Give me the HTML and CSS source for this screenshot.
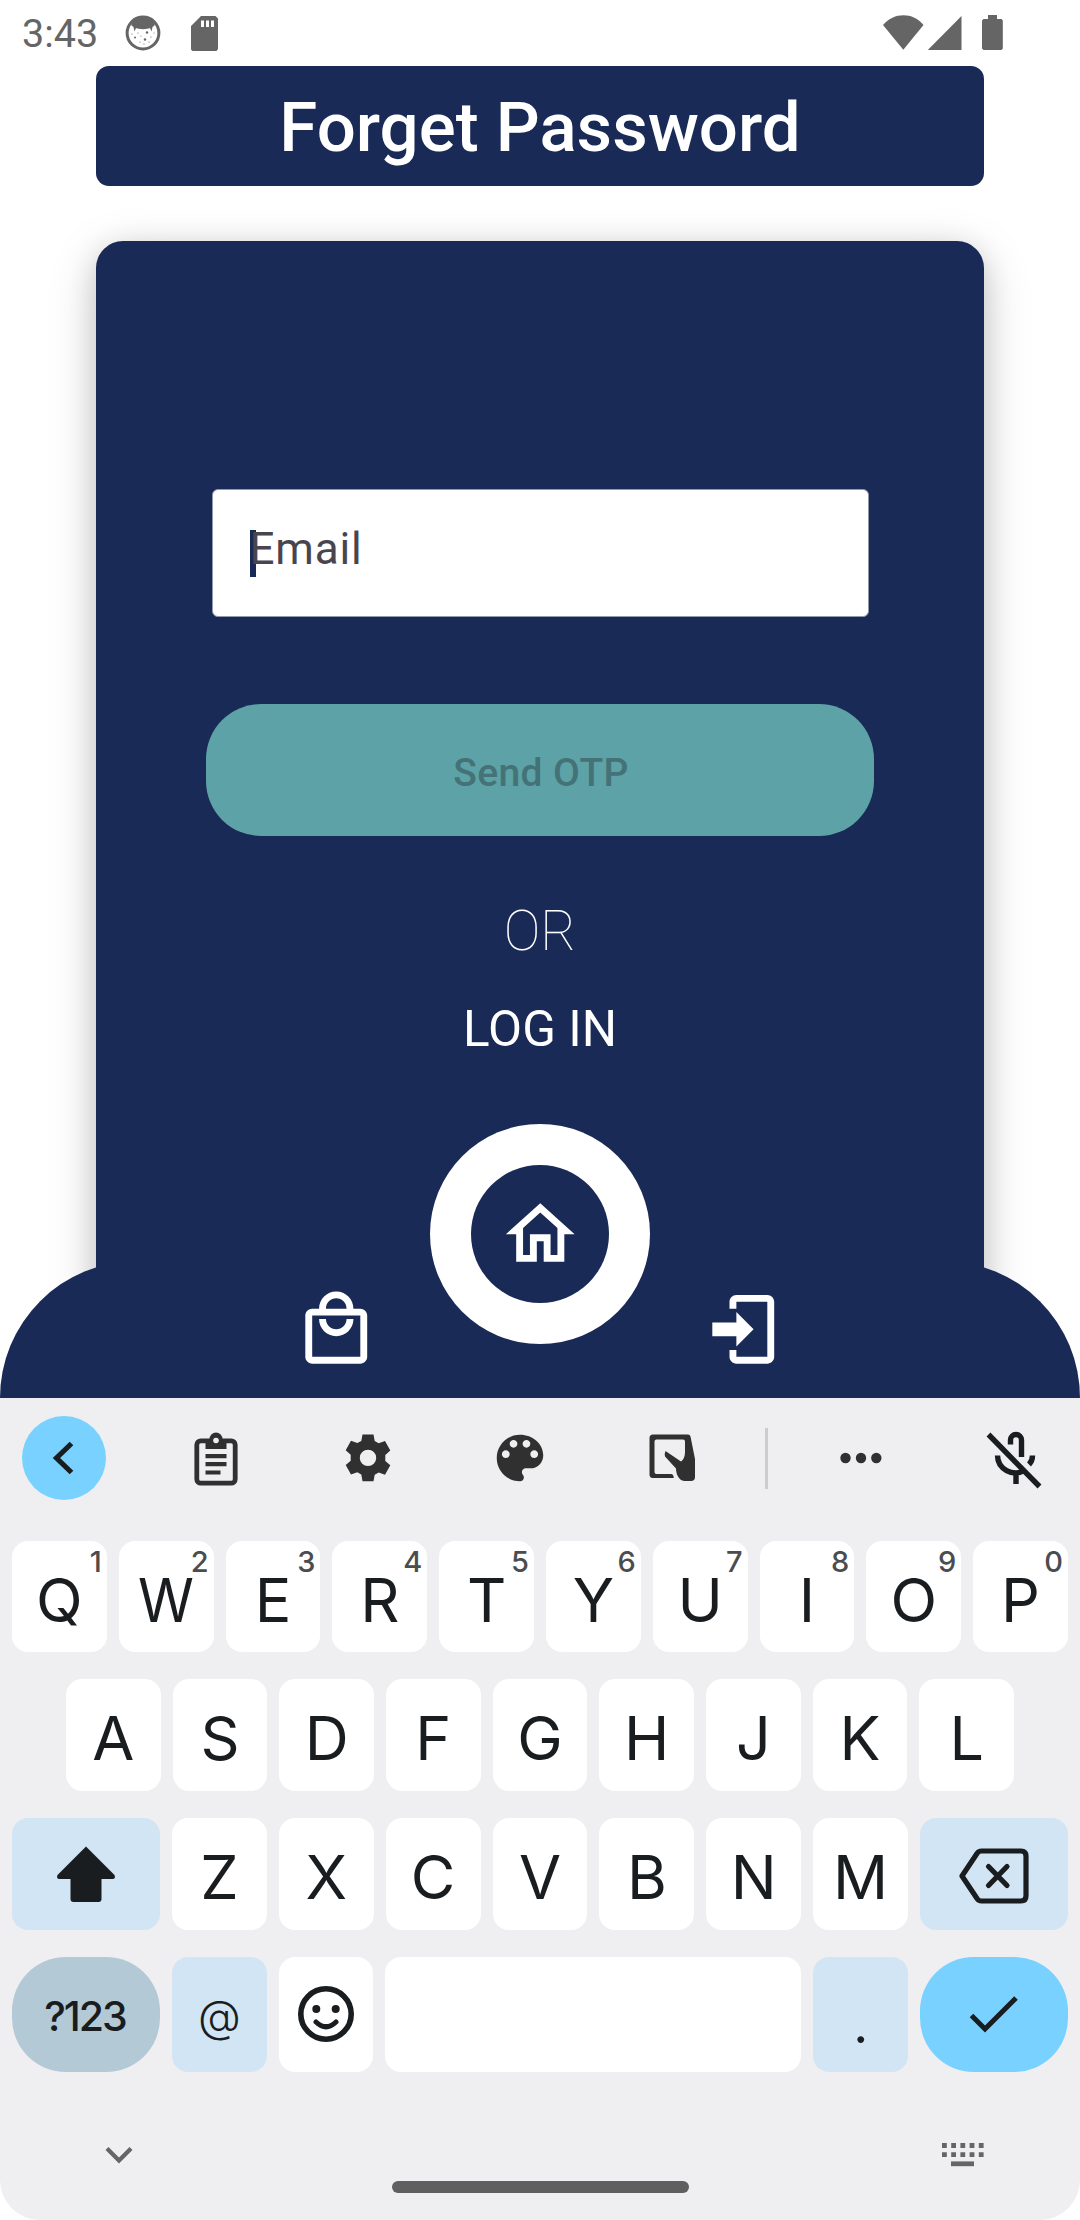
FILE: index.html
```html
<!DOCTYPE html>
<html lang="en">
<head>
<meta charset="utf-8">
<title>Forget Password</title>
<link rel="stylesheet" href="styles.css">
</head>
<body>
<div class="screen">
  <header class="status">
    <span class="clock">3:43</span>
    <svg class="st-cat" width="36" height="36" viewBox="0 0 36 36"><circle cx="18" cy="18" r="15.9" fill="none" stroke="#656565" stroke-width="3"/><path d="M6 10C9 4 13 2 18 2s9 2 12 8l-2.500 2-1 4.500-1.500-3.500c-3 1.500-11 1.500-14 0l-1.500 3.500-1-4.500z" fill="#656565"/><g fill="#656565"><circle cx="10" cy="22.500" r="1"/><circle cx="20" cy="24.500" r="1.200"/><circle cx="22" cy="17.500" r="1.200"/><circle cx="13" cy="18" r=".6"/><circle cx="26" cy="22" r=".6"/><circle cx="15" cy="27" r=".6"/><circle cx="19" cy="29" r=".6"/><circle cx="24" cy="27" r=".6"/><circle cx="7" cy="19" r=".6"/><circle cx="16" cy="21" r=".5"/><circle cx="29" cy="18" r=".5"/></g></svg>
    <svg class="st-sd" width="27" height="35" viewBox="0 0 27 35"><path fill="#656565" fill-rule="evenodd" d="M10 0h14.500L27 2.500V33l-1.500 2h-24L0 33.500V10zM10 4.500V11h3V4.500zM15 4.500V11h3V4.500zM20 4.500V11h3V4.500z"/></svg>
    <svg class="st-net" width="120" height="35" viewBox="0 0 120 35" fill="#656565"><path d="M0 10C11-3 30-3 40.500 10L20.300 34.800z"/><path d="M78.500 1v34H44.800z"/><path d="M105 0h9v4h4.500l1.300 1.500v28L118.500 35h-18L99 33.500v-28L100.500 4h4.500z"/></svg>
  </header>

  <h1 class="title">Forget Password</h1>

  <main class="card">
    <div class="field"><span class="caret"></span><span class="hint">Email</span></div>
    <button class="send" disabled>Send OTP</button>
    <p class="or">OR</p>
    <a class="login">LOG IN</a>
  </main>

  <nav class="nav">
    <svg class="nav-icon" viewBox="0 0 24 24"><path d="M19 6h-2c0-2.760-2.240-5-5-5S7 3.240 7 6H5c-1.100 0-2 .9-2 2v12c0 1.100.9 2 2 2h14c1.100 0 2-.9 2-2V8c0-1.100-.9-2-2-2zm-7-3c1.660 0 3 1.340 3 3H9c0-1.660 1.340-3 3-3zm7 17H5V8h14v12zm-7-8c-1.660 0-3-1.340-3-3H7c0 2.760 2.240 5 5 5s5-2.240 5-5h-2c0 1.660-1.340 3-3 3z"/></svg>
    <svg class="nav-icon" viewBox="0 0 24 24"><path d="M8 6V4c0-1.100.9-2 2-2h9c1.100 0 2 .9 2 2v16c0 1.100-.9 2-2 2h-9c-1.100 0-2-.9-2-2v-2h2v2h9V4h-9v2zM3 10h7V7l5 5-5 5v-3H3z"/></svg>
    <div class="home"><div class="home-in"><svg class="nav-icon" viewBox="0 0 24 24"><path d="M12 5.690l5 4.500V18h-2v-6H9v6H7v-7.810l5-4.500M12 3L2 12h3v8h6v-6h2v6h6v-8h3L12 3z"/></svg></div></div>
  </nav>

  <section class="keyboard">
    <div class="toolbar">
      <div class="tool back"><svg width="84" height="84" viewBox="0 0 84 84"><path d="M49.500 27.500L34.500 42l15 14.500" fill="none" stroke="#191d1f" stroke-width="5.200"/></svg></div>
      <div class="tool"><svg width="62" height="62" viewBox="0 0 62 62"><rect x="11.800" y="13.800" width="38.400" height="42.400" rx="4" fill="none" stroke="#303030" stroke-width="4.800"/><path d="M20.500 12h5a6 6 0 0 1 11 0h5v10h-21z" fill="#303030"/><path d="M24.500 12a6.500 6.500 0 0 1 13 0z" fill="#303030"/><circle cx="31" cy="13.500" r="2.800" fill="#efeff1"/><path d="M20.500 29.200h21M20.500 37.200h21M20.500 45.500h15" stroke="#303030" stroke-width="4.200"/></svg></div>
      <div class="tool"><svg width="62" height="62" viewBox="0 0 62 62"><path fill="#303030" fill-rule="evenodd" d="M25.500 7.500h11l1.200 6.500 4 2.300 6.300-2.300 5.300 9.500-5 4.500v6l5 4.300-5.300 9.400-6.300-2.200-4 2.300-1.200 6.500h-11L24.300 47.500l-4-2.300-6.300 2.200-5.300-9.400 5-4.300v-6l-5-4.500L14 13.700l6.300 2.300 4-2zM31 22.700a8.200 8.200 0 1 0 0 16.400 8.200 8.200 0 0 0 0-16.400z"/></svg></div>
      <div class="tool"><svg width="62" height="62" viewBox="0 0 24 24"><path fill="#303030" d="M12 3c-4.970 0-9 4.030-9 9s4.030 9 9 9c.83 0 1.500-.67 1.500-1.500 0-.39-.15-.74-.39-1.010-.23-.26-.38-.61-.38-.99 0-.83.67-1.500 1.500-1.500H16c2.760 0 5-2.240 5-5 0-4.420-4.030-8-9-8zm-5.500 9c-.83 0-1.500-.67-1.500-1.500S5.670 9 6.500 9 8 9.670 8 10.500 7.330 12 6.500 12zm3-4C8.670 8 8 7.330 8 6.500S8.670 5 9.500 5s1.500.67 1.500 1.500S10.330 8 9.500 8zm5 0c-.83 0-1.500-.67-1.500-1.500S13.670 5 14.500 5s1.500.67 1.500 1.500S15.330 8 14.500 8zm3 4c-.83 0-1.500-.67-1.500-1.500S16.670 9 17.500 9s1.500.67 1.500 1.500-.67 1.500-1.500 1.500z"/></svg></div>
      <div class="tool"><svg width="62" height="62" viewBox="0 0 62 62"><path fill="#303030" d="M12 7.500h35q2 0 2.500 2L54 32v18q0 4-4 4h-7q-3 0-5-3-3-4-3-9.500L24 29.500q-1-2 .5-5.500l15.500 10.500q4-3 4-9.500V14.500q0-2-2-2H15.500q-2 0-2 2V45q0 2 2 2H30q2.500 0 2.800 4H12q-3.500 0-3.500-3.500V11q0-3.500 3.500-3.500z"/></svg></div>
      <div class="divider"></div>
      <div class="tool"><svg width="62" height="62" viewBox="0 0 62 62" fill="#303030"><circle cx="15.500" cy="31" r="5.200"/><circle cx="31" cy="31" r="5.200"/><circle cx="46.300" cy="31" r="5.200"/></svg></div>
      <div class="tool"><svg width="62" height="62" viewBox="0 0 62 62"><g fill="none" stroke="#191d1f" stroke-width="5.400"><path d="M27.500 17.500V13a5.500 5.500 0 0 1 11 0v17"/><path d="M14.500 28.500a18 17.500 0 0 0 27 15M49.500 28.500q0 5.500-3.500 9M33 46v11"/><path d="M5.500 7.500l51 52"/></g></svg></div>
    </div>

    <div class="row row-top">
      <div class="key">Q<sup>1</sup></div><div class="key"><span class="narrow">W</span><sup>2</sup></div><div class="key">E<sup>3</sup></div><div class="key">R<sup>4</sup></div><div class="key">T<sup>5</sup></div><div class="key">Y<sup>6</sup></div><div class="key">U<sup>7</sup></div><div class="key">I<sup>8</sup></div><div class="key">O<sup>9</sup></div><div class="key">P<sup>0</sup></div>
    </div>
    <div class="row row-mid">
      <div class="key">A</div><div class="key">S</div><div class="key">D</div><div class="key">F</div><div class="key">G</div><div class="key">H</div><div class="key">J</div><div class="key">K</div><div class="key">L</div>
    </div>
    <div class="row">
      <div class="key wide tint"><svg width="60" height="56" viewBox="0 0 60 56"><path fill="#191d1f" d="M30 .5L58.500 29q1.500 4-2 4H45.500v20q0 3-3 3H17.500q-3 0-3-3V33H3.500q-3.500 0-2-4z"/></svg></div>
      <div class="key">Z</div><div class="key">X</div><div class="key">C</div><div class="key">V</div><div class="key">B</div><div class="key">N</div><div class="key">M</div>
      <div class="key wide tint erase"><svg width="72" height="58" viewBox="0 0 72 58"><g fill="none" stroke="#191d1f" stroke-width="5.200" stroke-linejoin="round" stroke-linecap="round"><path d="M4 29L19 6.500Q20.500 4 23.500 4H63q5 0 5 5v40q0 5-5 5H23.500q-3 0-4.500-2.500z"/><path d="M30.500 19.500l18.500 19M49 19.500l-18.500 19"/></g></svg></div>
    </div>
    <div class="row row-last">
      <div class="key wide sym">?123</div>
      <div class="key tint at">@</div>
      <div class="key"><svg width="58" height="58" viewBox="0 0 58 58"><circle cx="29" cy="29" r="25.200" fill="none" stroke="#191d1f" stroke-width="5.600"/><circle cx="19.300" cy="24" r="4" fill="#191d1f"/><circle cx="38.700" cy="24" r="4" fill="#191d1f"/><path d="M19 37q10 9.500 20 0" fill="none" stroke="#191d1f" stroke-width="5" stroke-linecap="round"/></svg></div>
      <div class="key space"></div>
      <div class="key tint dot">.</div>
      <div class="key wide go"><svg width="52" height="40" viewBox="0 0 52 40"><path d="M3.500 21.500L17 35 48 4" fill="none" stroke="#191d1f" stroke-width="5"/></svg></div>
    </div>

    <div class="sysbar">
      <svg class="hide" width="28" height="18" viewBox="0 0 28 18"><path d="M2 2.500L14 14.500 26 2.500" fill="none" stroke="#656565" stroke-width="4.200"/></svg>
      <svg width="42" height="24" viewBox="0 0 42 24"><path d="M0 2.500h41.800M0 11.700h41.800" stroke="#656565" stroke-width="4.800" stroke-dasharray="4.800 4.400"/><path d="M9 20.800h23" stroke="#656565" stroke-width="4.800"/></svg>
    </div>
    <div class="gesture"></div>
  </section>
</div>
</body>
</html>
```
FILE: styles.css
```css
* { box-sizing: border-box; }
body { margin: 0; background: #fff; font-family: Roboto, "Liberation Sans", sans-serif; }
svg { display: block; flex: none; }
.screen { width: 1080px; height: 2220px; display: flex; flex-direction: column; overflow: hidden; }

.status { height: 66px; flex: none; display: flex; align-items: flex-start; padding: 16px 77px 0 22px; color: #656565; }
.clock { font-size: 39.500px; line-height: 36px; width: 103px; }
.st-cat { margin-top: -1px; }
.st-sd { margin-left: 30px; }
.st-net { margin-left: auto; margin-top: -1px; }

.title { margin: 0 96px; height: 120px; flex: none; border-radius: 13px; background: #1a2a56; color: #fff; font-size: 69px; font-weight: 500; line-height: 124px; text-align: center; }

.card { margin: 55px 96px 0; height: 1149px; flex: none; border-radius: 27px; background: #1a2a56; padding: 248px 110px 0; display: flex; flex-direction: column; align-items: center; box-shadow: 0 14px 50px rgba(0,0,0,.18), 0 6px 28px rgba(0,0,0,.12); }
.field { width: 657px; height: 128px; flex: none; border: 1px solid #9299ad; border-radius: 6px; background: #fff; display: flex; padding: 40px 0 0 37px; }
.caret { width: 6px; height: 47px; background: #1a2a56; }
.hint { margin-left: -6px; font-size: 44px; line-height: 39px; letter-spacing: .8px; color: #49454f; }
.send { width: 668px; height: 132px; flex: none; margin-top: 87px; border: 0; border-radius: 55px; padding: 6px 0 0 2px; background: #5ca2a6; color: #447277; font: 500 39px Roboto, sans-serif; letter-spacing: .4px; }
.or { margin: 62px 0 0; font-size: 55px; line-height: 66px; font-weight: 100; color: #fff; }
.login { margin-top: 35px; font-size: 49.500px; line-height: 60px; color: #fff; }

.nav { position: relative; flex: none; margin-top: -129px; height: 137px; border-radius: 137px 137px 0 0; background: #1a2a56; display: flex; justify-content: space-between; padding: 27px 296px 0 295px; }
.nav-icon { width: 82.500px; height: 82.500px; fill: #fff; }
.home { position: absolute; left: 430px; top: -137px; width: 220px; height: 220px; border-radius: 50%; background: #fff; display: grid; place-items: center; }
.home-in { width: 138px; height: 138px; border-radius: 50%; background: #1a2a56; display: grid; place-items: center; }

.keyboard { flex: 1; background: #efeff1; border-radius: 0 0 40px 40px; padding: 18px 12px 0; color: #191d1f; font-family: Inter, "Liberation Sans", sans-serif; }
.toolbar { height: 84px; padding-left: 10px; display: grid; grid-template-columns: 118px 152px 152px 152px 152px 36px 153px 131px; align-items: center; justify-items: center; }
.tool { display: grid; place-items: center; }
.tool:last-child { justify-self: end; margin-right: 23px; }
.back { width: 84px; height: 84px; border-radius: 50%; background: #78d1ff; justify-self: start; }
.divider { width: 3px; height: 61px; background: #cbcccd; }
.row { display: flex; gap: 12px; margin-top: 27px; }
.row-top { margin-top: 41px; }
.row-mid { padding: 0 54px; }
.key { position: relative; flex: 1 1 0; height: 112px; border-radius: 16px; background: #fff; display: grid; place-items: center; font-size: 61px; line-height: 70px; padding-top: 6px; font-weight: 400; }
.row-top .key { height: 111px; }
.key svg { margin-top: -6px; }
.erase svg { margin-top: -2px; }
.narrow { transform: scaleX(.93); }
.key sup { position: absolute; right: 5px; top: 8px; font-size: 29px; line-height: 26px; font-weight: 450; color: #4b4c4e; }
.wide { flex: 0 0 148px; }
.tint { background: #d2e5f4; }
.row-last .key { height: 115px; }
.row-last .key svg { margin-top: -8px; }
.row-last .sym { background: #b4c9d6; border-radius: 54px; font-size: 41px; font-weight: 500; letter-spacing: -2px; padding: 2px 2px 0 0; }
.row-last .at { font-size: 44px; font-weight: 350; padding-top: 3px; }
.row-last .dot { font-size: 52px; padding-top: 20px; }
.row-last .space { flex: 0 0 416px; }
.row-last .go { background: #78d1ff; border-radius: 54px; }
.sysbar { display: flex; justify-content: space-between; padding: 71px 84px 0 93px; }
.hide { margin-top: 3px; }
.gesture { width: 297px; height: 12px; margin: 14px auto 0; border-radius: 6px; background: #5f5f60; }
```
